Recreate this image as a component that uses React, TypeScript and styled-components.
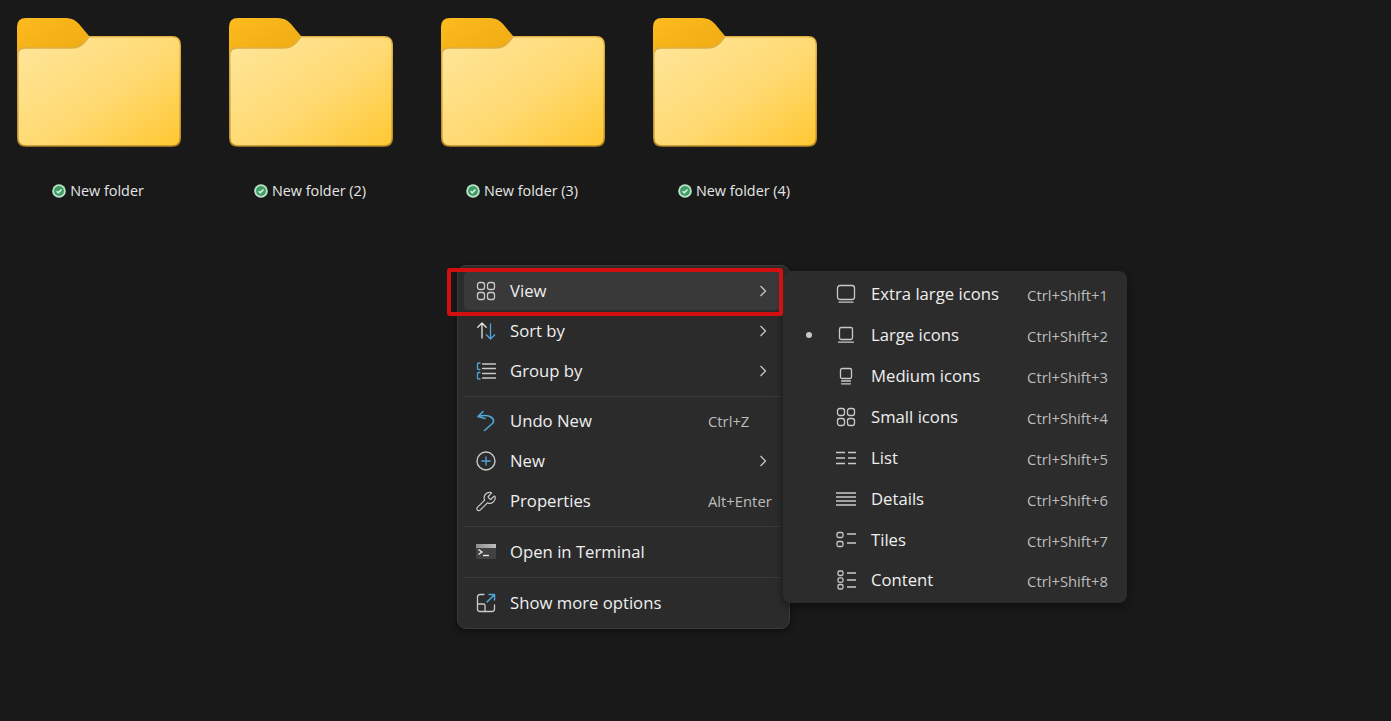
import React from 'react';
import styled, { createGlobalStyle } from 'styled-components';
import { Wrench } from 'lucide-react';

const GlobalStyle = createGlobalStyle`
  html, body {
    margin: 0;
    padding: 0;
    background: #191919;
  }
  body {
    font-family: "Open Sans", "Noto Sans", "Liberation Sans", sans-serif;
    overflow: hidden;
  }
`;

/* ----------------------------- desktop folders --------------------------- */

const Page = styled.div`
  width: 1391px;
  height: 721px;
  box-sizing: border-box;
  padding: 18px 0 0 17px;
  background: #191919;
`;

const FolderRow = styled.div`
  display: flex;
  gap: 48px;
  height: 247px;
  align-items: flex-start;
`;

const FolderCell = styled.div`
  display: flex;
  flex-direction: column;
  align-items: center;
  width: 164px;
`;

const FolderLabel = styled.div`
  display: flex;
  align-items: center;
  gap: 4px;
  margin-top: 35px;
  margin-right: 2px;
  height: 18px;
  font-size: 14.4px;
  line-height: 18px;
  color: #e6e6e6;
  white-space: nowrap;
`;

function FolderArt({ id }: { id: number }) {
  return (
    <svg width="164" height="129" viewBox="0 0 164 129">
      <defs>
        <linearGradient id={`tab${id}`} x1="0" y1="0" x2="1" y2="1">
          <stop offset="0" stopColor="#fdbb1e" />
          <stop offset="1" stopColor="#e9a50f" />
        </linearGradient>
        <linearGradient id={`body${id}`} x1="0" y1="0" x2="1" y2="1">
          <stop offset="0" stopColor="#ffe69c" />
          <stop offset="0.55" stopColor="#ffda72" />
          <stop offset="1" stopColor="#ffc832" />
        </linearGradient>
        <linearGradient id={`edge${id}`} x1="0" y1="0" x2="0" y2="1">
          <stop offset="0" stopColor="#e2b145" />
          <stop offset="1" stopColor="#b98a28" />
        </linearGradient>
      </defs>
      <path
        d="M0 9Q0 0 9 0H49Q57 0 62 6L72 18H90V50H0Z"
        fill={`url(#tab${id})`}
      />
      <path
        d="M0.750 37Q0.750 30 8 30H54Q62 30 67 25L72 18.750H155Q163.250 18.750 163.250 27V120Q163.250 128 155 128H9Q0.750 128 0.750 120Z"
        fill={`url(#body${id})`}
        stroke={`url(#edge${id})`}
        strokeWidth="1.500"
      />
    </svg>
  );
}

function SyncBadge() {
  return (
    <svg width="14" height="14" viewBox="0 0 14 14">
      <circle cx="7" cy="7" r="6.800" fill="#bfe3c9" />
      <circle cx="7" cy="7" r="5" fill="#3f9e68" />
      <path d="M4.600 7.200L6.300 8.800L9.500 5.400" fill="none" stroke="#eaf7ee" strokeWidth="1.400" />
    </svg>
  );
}

/* ------------------------------ icon drawings ---------------------------- */

const GREY = '#c9c9c9';
const BLUE = '#4fa6d8';

const IconSvg: React.FC<{ children: React.ReactNode }> = ({ children }) => (
  <svg width="22" height="22" viewBox="0 0 22 22" fill="none" stroke={GREY} strokeWidth="1.300" strokeLinecap="round" strokeLinejoin="round">
    {children}
  </svg>
);

const GridIcon = () => (
  <IconSvg>
    <rect x="2.500" y="2.500" width="7" height="7" rx="2.200" />
    <rect x="12.500" y="2.500" width="7" height="7" rx="2.200" />
    <rect x="2.500" y="12.500" width="7" height="7" rx="2.200" />
    <rect x="12.500" y="12.500" width="7" height="7" rx="2.200" />
  </IconSvg>
);

const SortIcon = () => (
  <IconSvg>
    <path d="M7 18V3M2.800 7.200L7 3l4.200 4.200" stroke="#e6e6e6" />
    <path d="M15.500 4v15M11.300 14.800l4.200 4.200 4.200-4.200" stroke={BLUE} />
  </IconSvg>
);

const GroupIcon = () => (
  <IconSvg>
    <path d="M5 3H3.500Q2.500 3 2.500 4V8.500Q2.500 9.500 3.500 9.500H5M5 12.500H3.500Q2.500 12.500 2.500 13.500V18Q2.500 19 3.500 19H5" stroke={BLUE} />
    <path d="M7.500 4h13M7.500 8.500h13M7.500 13.500h13M7.500 18h13" />
  </IconSvg>
);

const UndoIcon = () => (
  <IconSvg>
    <path d="M8 1.500L3 6.500l7 2M3 6.500Q10 4.500 15 6.500Q20 9 18 13L9.500 20.500" stroke={BLUE} strokeWidth="1.600" />
  </IconSvg>
);

const PlusIcon = () => (
  <IconSvg>
    <circle cx="11" cy="11" r="9" strokeWidth="1.400" />
    <path d="M11 6.800v8.400M6.800 11h8.400" stroke={BLUE} />
  </IconSvg>
);

const WrenchIcon = () => <Wrench size={23} color={GREY} strokeWidth={1.300} />;

const TerminalIcon = () => (
  <svg width="22" height="22" viewBox="0 0 22 22">
    <defs>
      <linearGradient id="termBand" x1="0" y1="0" x2="1" y2="0">
        <stop offset="0" stopColor="#8f8f8f" />
        <stop offset="1" stopColor="#bdbdbd" />
      </linearGradient>
    </defs>
    <rect x="1" y="3" width="20" height="15" fill="#424242" />
    <rect x="1" y="3" width="20" height="4" fill="url(#termBand)" />
    <path d="M3.500 8.500L7 11l-3.500 2.500" fill="none" stroke="#f0f0f0" strokeWidth="1.300" />
    <path d="M8 14.500h6" stroke="#f0f0f0" strokeWidth="1.300" />
  </svg>
);

const ExpandIcon = () => (
  <IconSvg>
    <path d="M9 2.500H5Q2.500 2.500 2.500 5V17Q2.500 19.500 5 19.500H17Q19.500 19.500 19.500 17V13" />
    <path d="M2.500 12H8.500Q10 12 10 13.500V19.500" />
    <path d="M12 10L19.500 2.500M14 2.500h5.500V8" stroke={BLUE} strokeWidth="1.500" />
  </IconSvg>
);

const ExtraLargeIcon = () => (
  <IconSvg>
    <rect x="2.500" y="2.500" width="17" height="14" rx="2.500" />
    <path d="M4 19.200h14" />
  </IconSvg>
);

const LargeIcon = () => (
  <IconSvg>
    <rect x="4.500" y="3.500" width="13" height="12" rx="1.800" />
    <path d="M3.500 18.200h15" />
  </IconSvg>
);

const MediumIcon = () => (
  <IconSvg>
    <rect x="5.500" y="3.500" width="11" height="10" rx="1.600" />
    <path d="M6.500 16h9M6.500 18.800h9" />
  </IconSvg>
);

const ListIcon = () => (
  <IconSvg>
    <path d="M1 5.500h9M1 11h9M1 16.500h9M13 5.500h8M13 11h8M13 16.500h8" strokeLinecap="butt" />
  </IconSvg>
);

const DetailsIcon = () => (
  <IconSvg>
    <path d="M1 5h20M1 9h20M1 13h20M1 17h20" strokeLinecap="butt" />
  </IconSvg>
);

const TilesIcon = () => (
  <IconSvg>
    <rect x="2" y="3.500" width="6" height="5" rx="1.500" />
    <rect x="2" y="12.500" width="6" height="5" rx="1.500" />
    <path d="M12 5h9M12 14h9" strokeLinecap="butt" />
  </IconSvg>
);

const ContentIcon = () => (
  <IconSvg>
    <rect x="3" y="2" width="5" height="4.500" rx="1.500" />
    <rect x="3" y="8.800" width="5" height="4.500" rx="1.500" />
    <rect x="3" y="15.500" width="5" height="4.500" rx="1.500" />
    <path d="M12 4h9M12 11h9M12 18h9" strokeLinecap="butt" />
  </IconSvg>
);

const ChevronIcon = () => (
  <svg width="10" height="14" viewBox="0 0 10 14" fill="none" stroke="#c4c4c4" strokeWidth="1.300">
    <path d="M2.500 2L7.500 7l-5 5" />
  </svg>
);

/* --------------------------------- menu ---------------------------------- */

const MenuAnchor = styled.div`
  position: relative;
  width: 333px;
  margin-left: 440px;
`;

const Menu = styled.div`
  box-sizing: border-box;
  width: 333px;
  height: 364px;
  padding: 5px 8px 0 6px;
  background: #2b2b2b;
  border: 1px solid #3b3b3b;
  border-radius: 9px;
  box-shadow: 0 2px 6px rgba(0, 0, 0, 0.5);
`;

const MenuRow = styled.div<{ $active?: boolean }>`
  display: flex;
  align-items: center;
  height: 40px;
  box-sizing: border-box;
  padding-left: 11px;
  border-radius: 5px;
  background: ${(p) => (p.$active ? 'linear-gradient(#393939, #393939) center / 100% 38px no-repeat' : 'transparent')};
`;

const RowIcon = styled.span`
  display: flex;
  align-items: center;
  justify-content: center;
  width: 22px;
  height: 22px;
  flex: none;
`;

const RowLabel = styled.span`
  flex: 1;
  margin-left: 13px;
  margin-top: -1px;
  font-size: 16.7px;
  line-height: 22px;
  color: #efefef;
  white-space: nowrap;
`;

const RowShortcut = styled.span`
  width: 63px;
  margin-right: 10px;
  font-size: 14.8px;
  line-height: 18px;
  color: #bdbdbd;
  white-space: nowrap;
`;

const RowChevron = styled.span`
  display: flex;
  width: 10px;
  margin-right: 13px;
`;

const Separator = styled.div<{ $h: number }>`
  height: ${(p) => p.$h}px;
  display: flex;
  align-items: center;
  &::before {
    content: '';
    flex: 1;
    height: 1px;
    background: #3a3a3a;
  }
`;

/* red annotation drawn over the first row */
const Highlight = styled.div`
  position: absolute;
  left: -10px;
  top: 3px;
  width: 336px;
  height: 48px;
  box-sizing: border-box;
  border: 4px solid #d30f10;
  border-radius: 3px;
  pointer-events: none;
  z-index: 3;
`;

const SubMenu = styled.div`
  position: absolute;
  left: 326px;
  top: 6px;
  box-sizing: border-box;
  width: 344px;
  height: 332px;
  padding: 3px 19px 0 0;
  background: #2c2c2c;
  border-radius: 8px;
  box-shadow: 0 3px 8px rgba(0, 0, 0, 0.45);
  z-index: 2;
`;

const SubRow = styled.div`
  display: flex;
  align-items: center;
  height: 40.86px;
`;

const BulletSlot = styled.span`
  display: flex;
  justify-content: center;
  width: 52px;
  flex: none;
`;

const Bullet = styled.span`
  width: 6px;
  height: 6px;
  border-radius: 50%;
  background: #c9c9c9;
`;

const SubLabel = styled.span`
  flex: 1;
  margin-left: 14px;
  font-size: 16.7px;
  line-height: 22px;
  color: #efefef;
  white-space: nowrap;
`;

const SubShortcut = styled.span`
  margin-top: 2px;
  font-size: 14.8px;
  line-height: 18px;
  color: #bdbdbd;
  white-space: nowrap;
`;

/* ---------------------------------- data --------------------------------- */

const folders = ['New folder', 'New folder (2)', 'New folder (3)', 'New folder (4)'];

const subItems = [
  { icon: <ExtraLargeIcon />, label: 'Extra large icons', keys: 'Ctrl+Shift+1' },
  { icon: <LargeIcon />, label: 'Large icons', keys: 'Ctrl+Shift+2', selected: true },
  { icon: <MediumIcon />, label: 'Medium icons', keys: 'Ctrl+Shift+3' },
  { icon: <GridIcon />, label: 'Small icons', keys: 'Ctrl+Shift+4' },
  { icon: <ListIcon />, label: 'List', keys: 'Ctrl+Shift+5' },
  { icon: <DetailsIcon />, label: 'Details', keys: 'Ctrl+Shift+6' },
  { icon: <TilesIcon />, label: 'Tiles', keys: 'Ctrl+Shift+7' },
  { icon: <ContentIcon />, label: 'Content', keys: 'Ctrl+Shift+8' },
];

type ItemProps = {
  icon: React.ReactNode;
  label: string;
  shortcut?: string;
  more?: boolean;
  active?: boolean;
};

const MenuItem: React.FC<ItemProps> = ({ icon, label, shortcut, more, active }) => (
  <MenuRow $active={active}>
    <RowIcon>{icon}</RowIcon>
    <RowLabel>{label}</RowLabel>
    {shortcut && <RowShortcut>{shortcut}</RowShortcut>}
    {more && (
      <RowChevron>
        <ChevronIcon />
      </RowChevron>
    )}
  </MenuRow>
);

export default function App() {
  return (
    <Page>
      <GlobalStyle />
      <FolderRow>
        {folders.map((name, i) => (
          <FolderCell key={name}>
            <FolderArt id={i} />
            <FolderLabel>
              <SyncBadge />
              {name}
            </FolderLabel>
          </FolderCell>
        ))}
      </FolderRow>
      <MenuAnchor>
        <Menu>
          <MenuItem icon={<GridIcon />} label="View" more active />
          <MenuItem icon={<SortIcon />} label="Sort by" more />
          <MenuItem icon={<GroupIcon />} label="Group by" more />
          <Separator $h={10} />
          <MenuItem icon={<UndoIcon />} label="Undo New" shortcut="Ctrl+Z" />
          <MenuItem icon={<PlusIcon />} label="New" more />
          <MenuItem icon={<WrenchIcon />} label="Properties" shortcut="Alt+Enter" />
          <Separator $h={11} />
          <MenuItem icon={<TerminalIcon />} label="Open in Terminal" />
          <Separator $h={11} />
          <MenuItem icon={<ExpandIcon />} label="Show more options" />
        </Menu>
        <Highlight />
        <SubMenu>
          {subItems.map((item) => (
            <SubRow key={item.label}>
              <BulletSlot>{item.selected && <Bullet />}</BulletSlot>
              <RowIcon>{item.icon}</RowIcon>
              <SubLabel>{item.label}</SubLabel>
              <SubShortcut>{item.keys}</SubShortcut>
            </SubRow>
          ))}
        </SubMenu>
      </MenuAnchor>
    </Page>
  );
}
